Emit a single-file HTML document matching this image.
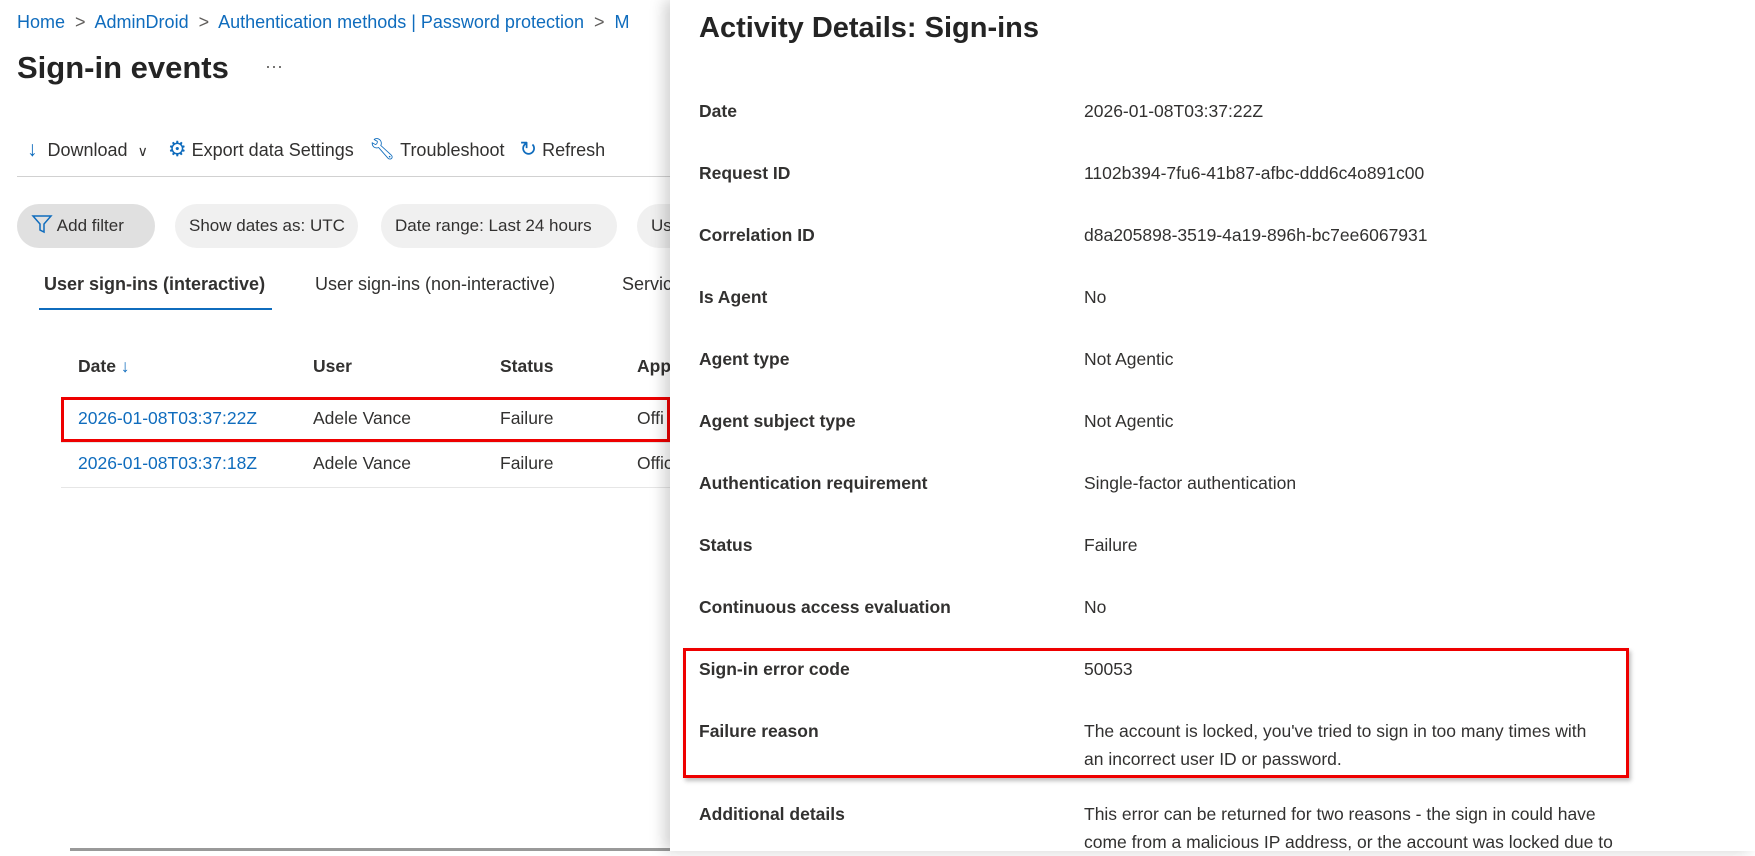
<!DOCTYPE html>
<html><head><style>
*{margin:0;padding:0;box-sizing:border-box}
body{width:1755px;height:851px;overflow:hidden;background:#fff;font-family:"Segoe UI","Liberation Sans",sans-serif;color:#323130;position:relative}
.a{position:absolute;white-space:nowrap}
.bc{top:12px;font-size:18px;color:#0f6cbd}
.chev{color:#605e5c}
.chip{position:absolute;top:204px;height:44px;border-radius:22px;background:#f0f0f0;font-size:17px;line-height:44px;padding:0 14px;white-space:nowrap;overflow:hidden}
.panel{position:absolute;left:670px;top:0;width:1085px;height:851px;background:#fff;box-shadow:-6px 0 14px rgba(0,0,0,.18)}
.lb{position:absolute;left:29px;font-size:17.5px;font-weight:600;color:#323130;line-height:28px}
.vl{position:absolute;left:414px;font-size:17.5px;color:#323130;line-height:28px}
.ic{color:#0f6cbd;font-size:21px}
</style></head><body>
<div class="a bc" style="left:17px">Home <span class="chev">&nbsp;&gt;&nbsp;</span> AdminDroid <span class="chev">&nbsp;&gt;&nbsp;</span> Authentication methods | Password protection <span class="chev">&nbsp;&gt;&nbsp;</span> M</div>
<div class="a" style="left:17px;top:50px;font-size:31px;font-weight:600;color:#242424">Sign-in events</div>
<div class="a" style="left:265px;top:56px;font-size:18px;color:#605e5c">···</div>
<div class="a" style="left:27px;top:137px;font-size:18px;color:#323130">
<span class="ic">↓</span>&nbsp; Download &nbsp;<span style="font-size:14px">∨</span>&nbsp;&nbsp;&nbsp; <span class="ic">⚙</span> Export data Settings &nbsp;&nbsp;<span class="ic">🔧︎</span> Troubleshoot &nbsp;&nbsp;<span class="ic">↻</span> Refresh</div>
<div class="a" style="left:17px;top:176px;width:655px;height:1px;background:#d1d1d1"></div>
<div class="chip" style="left:17px;background:#e0e0e0;width:138px">
<svg width="22" height="22" viewBox="0 0 22 22" style="vertical-align:-4px"><path d="M2 3h18l-7 8v8l-4-2v-6z" fill="none" stroke="#0f6cbd" stroke-width="1.5"/></svg> Add filter</div>
<div class="chip" style="left:175px;width:183px">Show dates as: UTC</div>
<div class="chip" style="left:381px;width:236px">Date range: Last 24 hours</div>
<div class="chip" style="left:637px;width:60px">Us</div>
<div class="a" style="left:44px;top:274px;font-size:18px;font-weight:600">User sign-ins (interactive)</div>
<div class="a" style="left:39px;top:308px;width:233px;height:2px;background:#0f6cbd"></div>
<div class="a" style="left:315px;top:274px;font-size:18px">User sign-ins (non-interactive)</div>
<div class="a" style="left:622px;top:274px;font-size:18px">Servic</div>
<div class="a" style="left:78px;top:356px;font-size:17.5px;font-weight:600">Date <span style="color:#0f6cbd">↓</span></div>
<div class="a" style="left:313px;top:356px;font-size:17.5px;font-weight:600">User</div>
<div class="a" style="left:500px;top:356px;font-size:17.5px;font-weight:600">Status</div>
<div class="a" style="left:637px;top:356px;font-size:17.5px;font-weight:600">App</div>
<div class="a" style="left:61px;top:442px;width:611px;height:1px;background:#e6e6e6"></div>
<div class="a" style="left:61px;top:487px;width:611px;height:1px;background:#e6e6e6"></div>
<div class="a" style="left:78px;top:408px;font-size:17.5px;color:#0f6cbd">2026-01-08T03:37:22Z</div>
<div class="a" style="left:313px;top:408px;font-size:17.5px">Adele Vance</div>
<div class="a" style="left:500px;top:408px;font-size:17.5px">Failure</div>
<div class="a" style="left:637px;top:408px;font-size:17.5px">Offi</div>
<div class="a" style="left:78px;top:453px;font-size:17.5px;color:#0f6cbd">2026-01-08T03:37:18Z</div>
<div class="a" style="left:313px;top:453px;font-size:17.5px">Adele Vance</div>
<div class="a" style="left:500px;top:453px;font-size:17.5px">Failure</div>
<div class="a" style="left:637px;top:453px;font-size:17.5px">Offic</div>
<div class="a" style="left:61px;top:397px;width:609px;height:45px;border:3px solid #e00;"></div>
<div class="a" style="left:70px;top:848px;width:602px;height:3px;background:#999"></div>
<div class="panel">
<div class="a" style="left:29px;top:12px;font-size:29px;font-weight:600;color:#242424">Activity Details: Sign-ins</div>
<div class="lb" style="top:97px">Date</div><div class="vl" style="top:97px">2026-01-08T03:37:22Z</div>
<div class="lb" style="top:159px">Request ID</div><div class="vl" style="top:159px">1102b394-7fu6-41b87-afbc-ddd6c4o891c00</div>
<div class="lb" style="top:221px">Correlation ID</div><div class="vl" style="top:221px">d8a205898-3519-4a19-896h-bc7ee6067931</div>
<div class="lb" style="top:283px">Is Agent</div><div class="vl" style="top:283px">No</div>
<div class="lb" style="top:345px">Agent type</div><div class="vl" style="top:345px">Not Agentic</div>
<div class="lb" style="top:407px">Agent subject type</div><div class="vl" style="top:407px">Not Agentic</div>
<div class="lb" style="top:469px">Authentication requirement</div><div class="vl" style="top:469px">Single-factor authentication</div>
<div class="lb" style="top:531px">Status</div><div class="vl" style="top:531px">Failure</div>
<div class="lb" style="top:593px">Continuous access evaluation</div><div class="vl" style="top:593px">No</div>
<div class="lb" style="top:655px">Sign-in error code</div><div class="vl" style="top:655px">50053</div>
<div class="lb" style="top:717px">Failure reason</div><div class="vl" style="top:717px">The account is locked, you've tried to sign in too many times with<br>an incorrect user ID or password.</div>
<div class="lb" style="top:800px">Additional details</div><div class="vl" style="top:800px">This error can be returned for two reasons - the sign in could have<br>come from a malicious IP address, or the account was locked due to</div>
<div class="a" style="left:13px;top:648px;width:946px;height:130px;border:3px solid #e00;box-shadow:2px 3px 4px rgba(0,0,0,.25)"></div>
</div>
</body></html>
